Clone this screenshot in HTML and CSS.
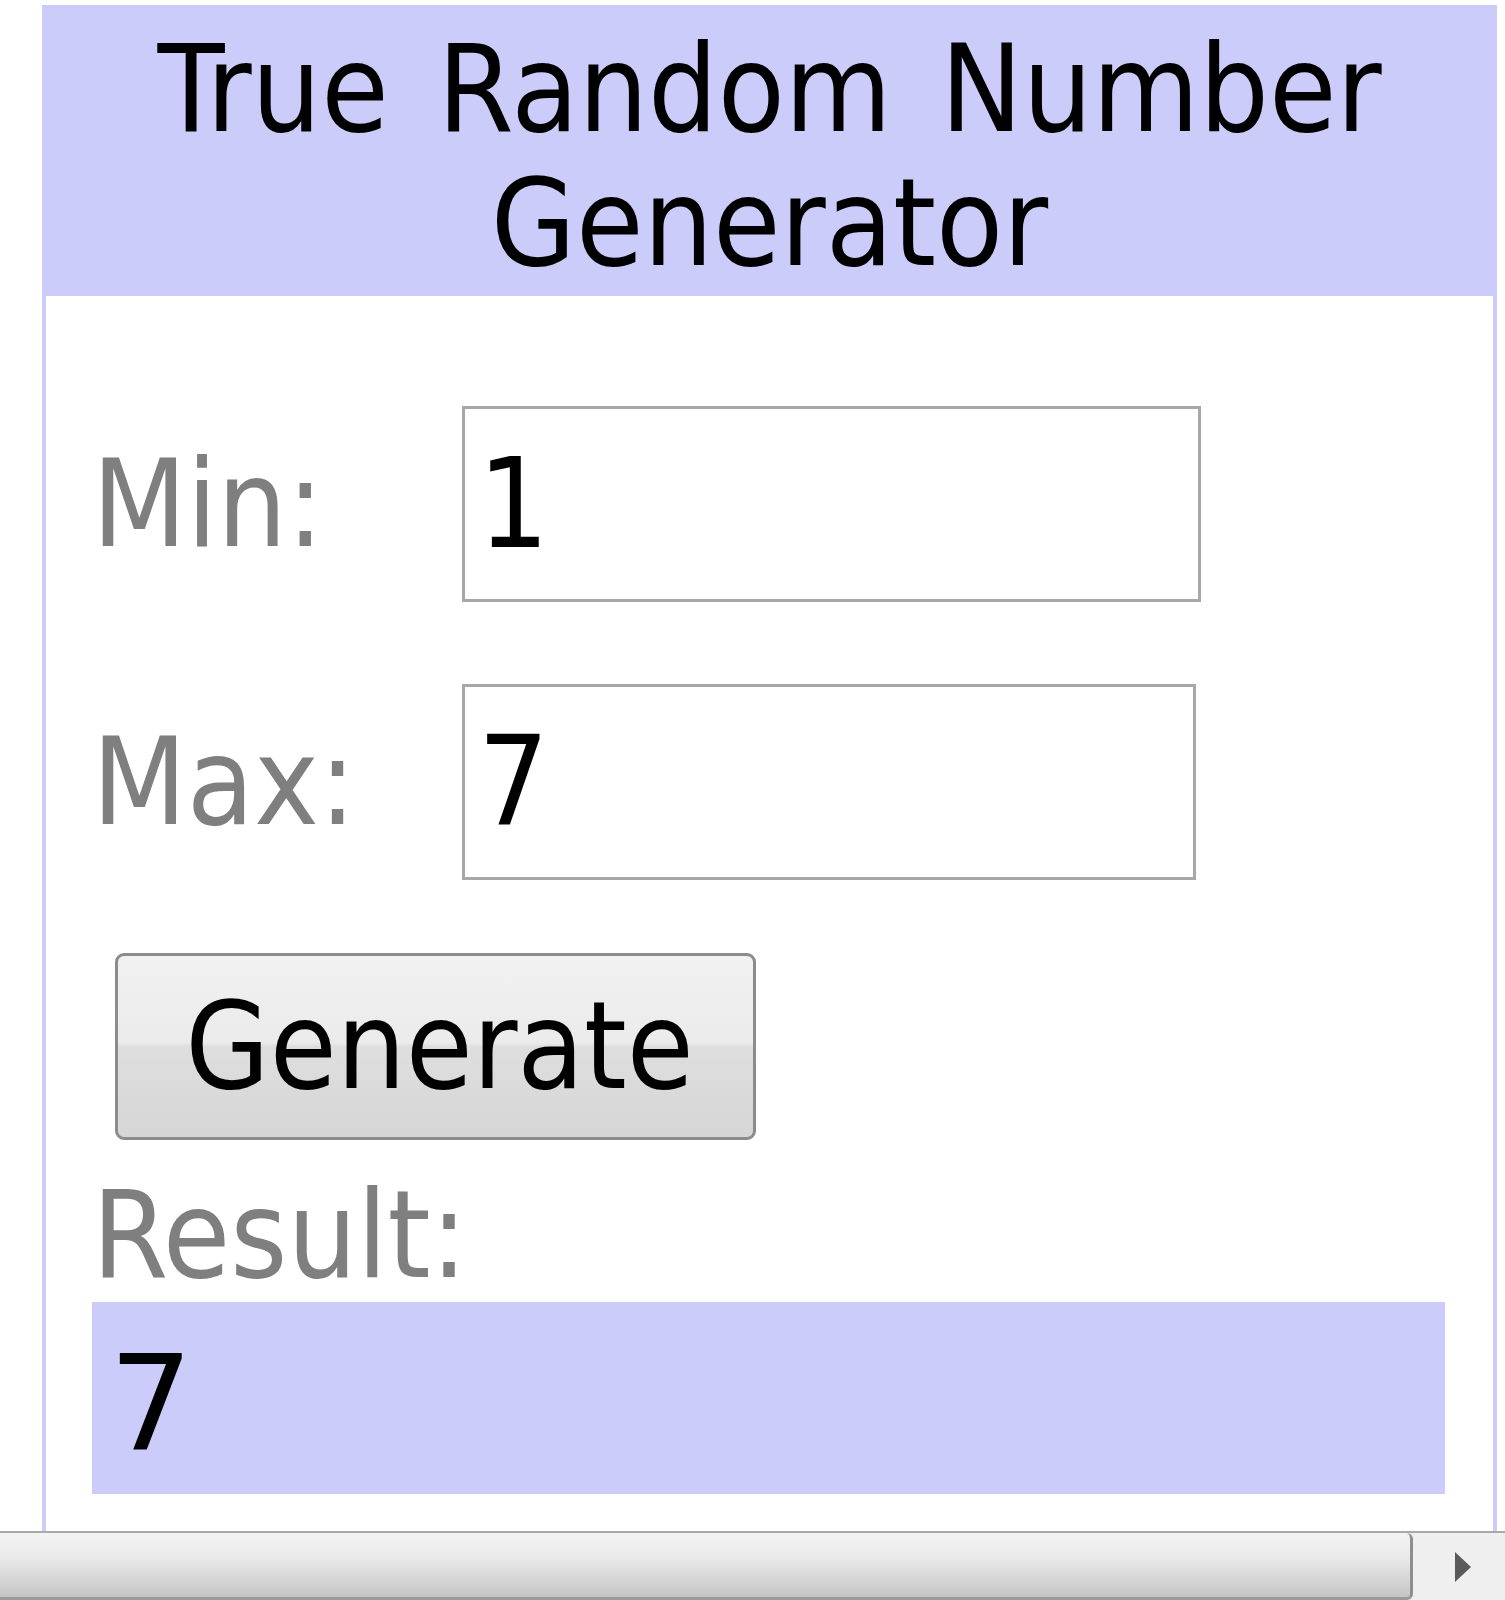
FILE: index.html
```html
<!DOCTYPE html>
<html lang="en">

<head>
  <meta charset="UTF-8">
  <meta name="viewport" content="width=device-width, initial-scale=1.0">
  <title>True Random Number Generator</title>
  <link rel="stylesheet" href="styles.css">
</head>

<body>
  <div class="screen">
    <div class="viewport">
      <div class="widget">
        <div class="widget-title">True Random Number Generator</div>
        <div class="widget-body">
          <div class="field-grid">
            <label class="field-label" for="min">Min:</label>
            <input class="field-input" id="min" type="text" value="1">
            <label class="field-label" for="max">Max:</label>
            <input class="field-input field-input-max" id="max" type="text" value="7">
          </div>
          <button class="generate-btn">Generate</button>
          <div class="result-label">Result:</div>
          <div class="result-box">7</div>
        </div>
      </div>
    </div>
    <div class="hscroll">
      <div class="hscroll-thumb"></div>
      <div class="hscroll-arrow">
        <svg width="20" height="32" viewBox="0 0 20 32" xmlns="http://www.w3.org/2000/svg">
          <path d="M2 1L18 16L2 31Z" fill="#5a5a5a" />
        </svg>
      </div>
    </div>
  </div>
</body>

</html>
```
FILE: styles.css
```css
  body {
    margin: 0;
    background: #fff;
    font-family: "DejaVu Sans Condensed", "DejaVu Sans", sans-serif;
    font-stretch: condensed;
  }

  .screen {
    display: flex;
    flex-direction: column;
    height: 1600px;
    overflow: hidden;
  }

  .viewport {
    height: 1531px;
    overflow: hidden;
    padding-top: 5px;
    padding-left: 42px;
    box-sizing: border-box;
  }

  .widget {
    width: 1455px;
    border: 4px solid #ccccfa;
    border-top: none;
    box-sizing: border-box;
  }

  .widget-title {
    background: #ccccfa;
    color: #000;
    text-align: center;
    font-size: 122px;
    line-height: 134px;
    word-spacing: 14px;
    padding: 17px 0 6px;
    margin: 0 -4px;
  }

  .widget-body {
    padding: 110px 48px 60px 46px;
  }

  .field-grid {
    display: grid;
    grid-template-columns: 370px auto;
    row-gap: 82px;
    align-items: center;
  }

  .field-label {
    color: #7f7f7f;
    font-size: 122px;
    line-height: 134px;
  }

  .field-input {
    width: 739px;
    height: 196px;
    box-sizing: border-box;
    border: 3px solid #a8a8a8;
    padding: 0 13px;
    font-family: inherit;
    font-stretch: condensed;
    font-size: 124px;
    color: #000;
    background: #fff;
    outline: none;
  }

  .field-input-max {
    width: 734px;
  }

  .generate-btn {
    display: block;
    margin: 73px 0 0 23px;
    width: 641px;
    height: 187px;
    border: 3px solid #8c8c8c;
    border-radius: 9px;
    background: linear-gradient(#f1f1f1 0%, #ebebeb 48%, #dedede 50%, #d6d6d6 100%);
    font-family: inherit;
    font-stretch: condensed;
    font-size: 121px;
    color: #000;
    padding: 0 0 0 8px;
  }

  .result-label {
    color: #7f7f7f;
    font-size: 122px;
    line-height: 134px;
    margin-top: 28px;
  }

  .result-box {
    background: #ccccfa;
    height: 192px;
    box-sizing: border-box;
    padding: 8px 0 0 17px;
    font-family: "DejaVu Sans", sans-serif;
    font-stretch: normal;
    font-size: 132px;
    line-height: 186px;
    color: #000;
  }

  .hscroll {
    height: 69px;
    display: flex;
    border-top: 2px solid #a9a9a9;
    box-sizing: border-box;
    background: #efefef;
  }

  .hscroll-thumb {
    width: 1413px;
    background: linear-gradient(#f3f3f3 0%, #e9e9e9 40%, #d2d2d2 80%, #c4c4c4 100%);
    border-right: 3px solid #8e8e8e;
    border-bottom: 3px solid #9a9a9a;
    border-radius: 0 6px 6px 0;
    box-sizing: border-box;
  }

  .hscroll-arrow {
    flex: 1;
    display: flex;
    align-items: center;
    padding-left: 40px;
  }
```
